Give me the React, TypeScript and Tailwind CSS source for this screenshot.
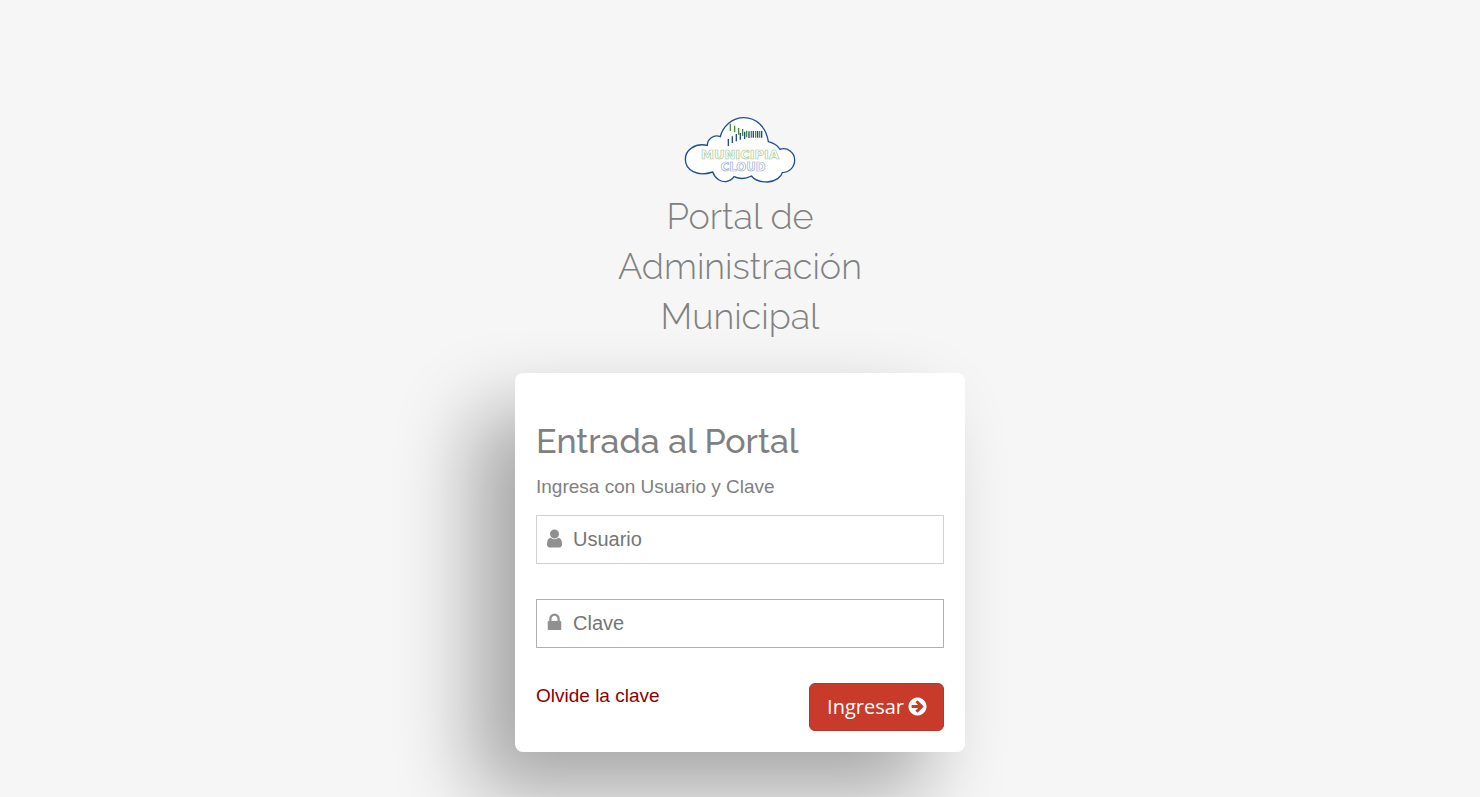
import type { ReactNode } from "react";

function Glyph({ d, className }: { d: string; className?: string }) {
  return (
    <svg viewBox="0 0 1792 1792" fill="currentColor" aria-hidden="true" className={className}>
      <path d={d} />
    </svg>
  );
}

const USER =
  "M1536 1399q0 109-62.5 187t-150.5 78h-854q-88 0-150.5-78t-62.5-187q0-85 8.5-160.5t31.5-152 58.5-131 94-89 134.5-34.5q131 128 313 128t313-128q76 0 134.5 34.5t94 89 58.5 131 31.5 152 8.5 160.5zm-256-887q0 159-112.5 271.5t-271.5 112.5-271.5-112.5-112.5-271.5 112.5-271.5 271.5-112.5 271.5 112.5 112.5 271.5z";
const LOCK =
  "M640 768h512v-192q0-106-75-181t-181-75-181 75-75 181v192zm832 96v576q0 40-28 68t-68 28h-960q-40 0-68-28t-28-68v-576q0-40 28-68t68-28h32v-192q0-184 132-316t316-132 316 132 132 316v192h32q40 0 68 28t28 68z";
const ARROW =
  "M1413 896q0-27-18-45l-91-91-362-362q-18-18-45-18t-45 18l-91 91q-18 18-18 45t18 45l189 189h-502q-26 0-45 19t-19 45v128q0 26 19 45t45 19h502l-189 189q-19 19-19 45t19 45l91 91q18 18 45 18t45-18l362-362 91-91q18-18 18-45zm251 0q0 209-103 385.5t-279.5 279.5-385.5 103-385.5-103-279.5-279.5-103-385.5 103-385.5 279.5-279.5 385.5-103 385.5 103 279.5 279.5 103 385.5z";

function Logo() {
  return (
    <svg viewBox="12 18 336 201" className="h-[67px] w-28" role="img" aria-label="Municipia Cloud">
      <path
        d="M82 106C45 98 16 120 16 148C16 180 52 202 98 186C106 208 124 216 138 215C150 213 158 206 162 200Q188 212 214 198C224 210 240 216 262 216C288 214 304 200 307 188C330 186 344 170 344 150C344 128 322 110 300 118C290 102 278 98 265 95C258 50 228 23 192 23C155 23 128 50 121 80C100 72 82 88 82 106Z"
        fill="#fff"
        stroke="#1f4f96"
        strokeWidth="4"
      />
      <path
        d="M151 41v22M164 47v20M176 54v20M188 57v21M200 62v20M214 63v20M227 63v20M239 63v20"
        stroke="#4d8c3c"
        strokeWidth="4"
      />
      <path
        d="M145 87v21M157 79v20M169 72v22M181 69v20M194 65v22M207 64v20M220 63v20M233 63v20M245 63v20"
        stroke="#234a8f"
        strokeWidth="4"
      />
      <g fontFamily="DejaVu Sans" fontWeight="700" textAnchor="middle" fill="#fff" strokeWidth="2">
        <text x="180" y="146" fontSize="39" stroke="#a3cb95">
          MUNICIPIA
        </text>
        <text x="189" y="182" fontSize="35" stroke="#98aad4">
          CLOUD
        </text>
      </g>
    </svg>
  );
}

function Field(props: { label: string; type: string; icon: ReactNode; border: string }) {
  return (
    <label className={`flex h-[49px] items-center border bg-white pb-0.5 pl-[7px] ${props.border}`}>
      <span className="w-[29px] shrink-0 text-[#909090]">{props.icon}</span>
      <input
        type={props.type}
        aria-label={props.label}
        placeholder={props.label}
        className="min-w-0 flex-1 bg-transparent text-xl text-[#555] outline-none placeholder:text-[#757575]"
      />
    </label>
  );
}

export default function App() {
  return (
    <div className="flex min-h-screen flex-col items-center overflow-hidden bg-[#f6f6f6] px-4 pt-29 pb-11 font-['Liberation_Sans',Arial,sans-serif] text-[#808080]">
      <Logo />
      <h1 className="mt-2 max-w-[300px] text-center font-['Raleway','Open_Sans',sans-serif] text-4xl leading-[50px] font-light">
        Portal de Administración Municipal
      </h1>
      <main className="mt-8 w-full max-w-[450px] rounded-lg bg-white px-[21px] pt-11 pb-[21px] shadow-[-40px_40px_80px_rgba(0,0,0,0.33)]">
        <h2 className="font-['Raleway','Lato',sans-serif] text-[34px] leading-12 font-medium">
          Entrada al Portal
        </h2>
        <p className="mt-2 text-[19px] leading-7">Ingresa con Usuario y Clave</p>
        <form className="mt-[14px]" onSubmit={(e) => e.preventDefault()}>
          <div className="flex flex-col gap-[35px]">
            <Field
              label="Usuario"
              type="text"
              icon={<Glyph d={USER} className="size-[21px]" />}
              border="border-[#d0d0d0]"
            />
            <Field
              label="Clave"
              type="password"
              icon={<Glyph d={LOCK} className="size-[21px]" />}
              border="border-[#b0b0b0]"
            />
          </div>
          <div className="mt-[35px] flex items-start justify-between">
            <a href="#clave" className="text-[19px] leading-[26px] text-[#8b0000]">
              Olvide la clave
            </a>
            <button
              type="submit"
              className="flex h-12 items-center gap-[3px] rounded-md border border-[#b5352a] bg-[#c83a2a] pr-[15px] pl-[17px] font-['Open_Sans',sans-serif] text-xl text-white"
            >
              Ingresar
              <Glyph d={ARROW} className="mb-0.5 size-[21px]" />
            </button>
          </div>
        </form>
      </main>
    </div>
  );
}
